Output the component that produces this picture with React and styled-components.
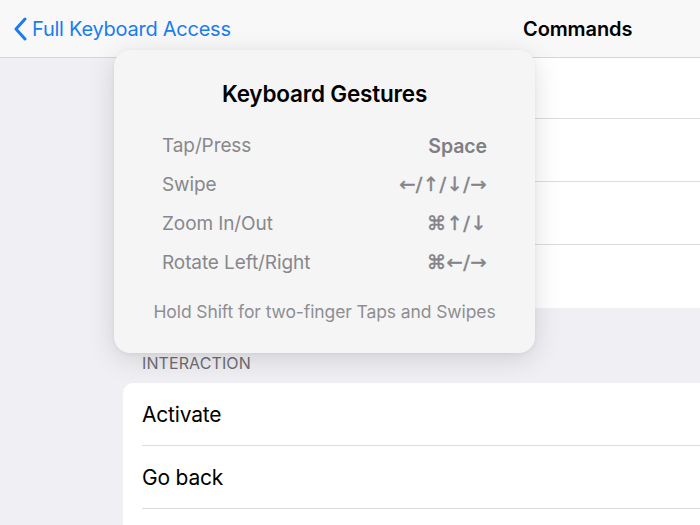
import React from "react"
import styled, { createGlobalStyle } from "styled-components"

const GlobalStyle = createGlobalStyle`
  html, body {
    margin: 0;
    padding: 0;
    background: #efeff4;
    font-family: Inter, "Noto Sans", "Liberation Sans", sans-serif;
    -webkit-font-smoothing: antialiased;
  }
`

const Screen = styled.div`
  position: relative;
  width: 700px;
  height: 525px;
  overflow: hidden;
  background: #efeff4;
`

const NavBar = styled.header`
  height: 57px;
  display: flex;
  align-items: center;
  background: #f8f8f8;
  border-bottom: 1px solid #d6d6d9;
`

const BackButton = styled.div`
  display: flex;
  align-items: center;
  gap: 5px;
  width: 470px;
  padding-left: 13px;
  color: #1a7cf0;
  font-size: 20px;
  letter-spacing: -0.25px;
`

const NavTitle = styled.div`
  font-size: 20px;
  font-weight: 600;
  color: #000;
  letter-spacing: -0.1px;
  margin-left: 40px;
`

const Content = styled.main`
  padding-left: 123px;
`

const Card = styled.section`
  background: #fff;
  border-radius: ${p => (p.$top ? "0" : "10px 0 0 0")};
`

const Row = styled.div`
  box-sizing: border-box;
  height: ${p => p.$h || 63}px;
  margin-left: 19px;
  padding-top: 1px;
  display: flex;
  align-items: center;
  font-size: 21px;
  letter-spacing: -0.2px;
  color: #000;
  border-bottom: ${p => (p.$last ? "none" : "1px solid #dcdcdf")};
`

const SectionHeader = styled.div`
  height: 75px;
  box-sizing: border-box;
  padding: 45px 0 0 19px;
  font-size: 16px;
  color: #6d6d72;
  letter-spacing: 0.1px;
`

const Popup = styled.div`
  position: absolute;
  left: 114px;
  top: 50px;
  width: 421px;
  height: 303px;
  box-sizing: border-box;
  padding: 30px 48px 0;
  border-radius: 16px;
  background: #f5f5f6;
  box-shadow: 0 6px 28px rgba(0, 0, 0, 0.13), 0 1px 4px rgba(0, 0, 0, 0.05);
  display: flex;
  flex-direction: column;
`

const PopupTitle = styled.h2`
  margin: 0 0 18px;
  text-align: center;
  font-size: 22.5px;
  font-weight: 600;
  color: #000;
  letter-spacing: -0.2px;
  line-height: 28px;
`

const Gesture = styled.div`
  height: 39px;
  display: flex;
  align-items: center;
  justify-content: space-between;
  font-size: 19px;
  color: #88888c;
  letter-spacing: -0.1px;
`

const Keys = styled.span`
  font-weight: ${p => (p.$bold ? 600 : 400)};
  color: ${p => (p.$bold ? "#7f7f84" : "#848488")};
  font-family: ${p => (p.$bold ? "inherit" : `"DejaVu Sans", sans-serif`)};
  font-size: ${p => (p.$bold ? 19.5 : 19.5)}px;
  letter-spacing: ${p => (p.$bold ? "-0.1px" : "0.4px")};
  -webkit-text-stroke: ${p => (p.$bold ? "0" : "0.4px")};
`

const Footer = styled.div`
  margin: 19px -20px 0;
  text-align: center;
  font-size: 17.5px;
  color: #8e8e92;
  letter-spacing: -0.1px;
`

const Chevron = () => (
  <svg width="14" height="24" viewBox="0 0 14 24">
    <path
      d="M12 2 L3 12 L12 22"
      fill="none"
      stroke="#1a7cf0"
      strokeWidth="3"
      strokeLinecap="round"
      strokeLinejoin="round"
    />
  </svg>
)

const gestures = [
  { label: "Tap/Press", keys: "Space", bold: true },
  { label: "Swipe", keys: "←/↑/↓/→" },
  { label: "Zoom In/Out", keys: "⌘↑/↓" },
  { label: "Rotate Left/Right", keys: "⌘←/→" },
]

export default function App() {
  return (
    <Screen>
      <GlobalStyle />
      <NavBar>
        <BackButton>
          <Chevron />
          Full Keyboard Access
        </BackButton>
        <NavTitle>Commands</NavTitle>
      </NavBar>
      <Content>
        <Card $top>
          <Row $h={61} />
          <Row />
          <Row />
          <Row $last />
        </Card>
        <SectionHeader>INTERACTION</SectionHeader>
        <Card>
          <Row>Activate</Row>
          <Row>Go back</Row>
          <Row $last />
        </Card>
      </Content>
      <Popup>
        <PopupTitle>Keyboard Gestures</PopupTitle>
        {gestures.map(g => (
          <Gesture key={g.label}>
            <span>{g.label}</span>
            <Keys $bold={g.bold}>{g.keys}</Keys>
          </Gesture>
        ))}
        <Footer>Hold Shift for two-finger Taps and Swipes</Footer>
      </Popup>
    </Screen>
  )
}
